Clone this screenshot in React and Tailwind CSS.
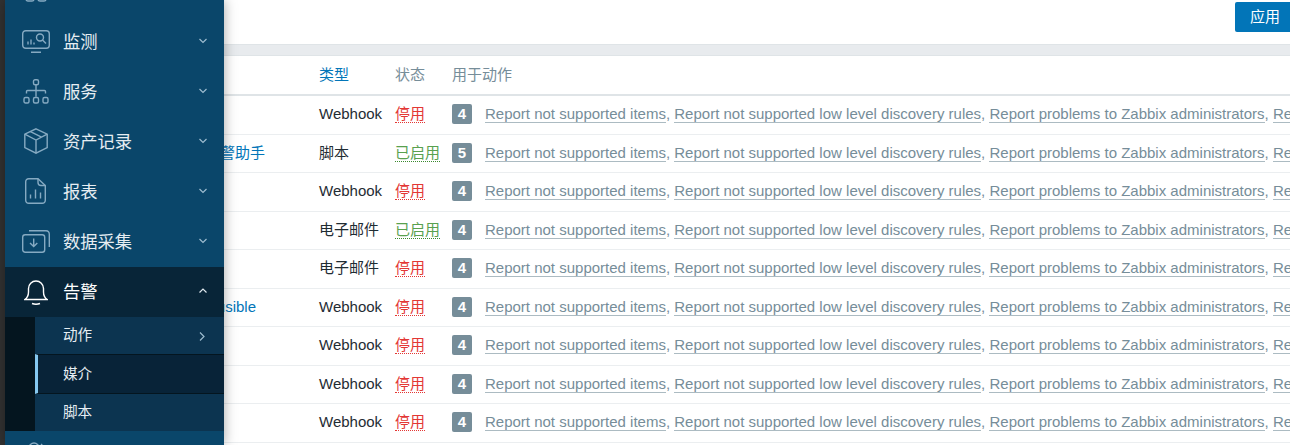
const cjk = '"Liberation Sans", "Noto Sans CJK SC", sans-serif'

const rows = [
  { name: '', type: 'Webhook', on: false, count: 4 },
  { name: '告警助手', type: '脚本', on: true, count: 5 },
  { name: '', type: 'Webhook', on: false, count: 4 },
  { name: '', type: '电子邮件', on: true, count: 4 },
  { name: '', type: '电子邮件', on: false, count: 4 },
  { name: 'Plausible', type: 'Webhook', on: false, count: 4 },
  { name: '', type: 'Webhook', on: false, count: 4 },
  { name: '', type: 'Webhook', on: false, count: 4 },
  { name: '', type: 'Webhook', on: false, count: 4 },
]

const actions = [
  'Report not supported items',
  'Report not supported low level discovery rules',
  'Report problems to Zabbix administrators',
  'Report problems to Zabbix users',
]

const Chevron = ({ dir = 'down', className = 'text-[#9dbccf]' }) => {
  const d = { down: 'M.5 1l3.5 3.5L7.5 1', up: 'M.5 4.5L4 1l3.5 3.5', right: 'M1 .5L5 4.5 1 8.5' }[dir]
  return (
    <svg className={className} width="8" height="9" viewBox="0 0 8 9" fill="none" stroke="currentColor" strokeWidth="1.2">
      <path d={d} />
    </svg>
  )
}

const DashIcon = () => (
  <svg width="22" height="20" viewBox="0 0 22 20" fill="none" stroke="currentColor" strokeWidth="1.4">
    <rect x="1" y="1" width="8" height="8" rx="2" />
    <rect x="13" y="1" width="8" height="8" rx="2" />
    <rect x="1" y="11" width="8" height="8" rx="2" />
    <rect x="13" y="11" width="8" height="8" rx="2" />
  </svg>
)

const MonitorIcon = () => (
  <svg width="28" height="23" viewBox="0 0 28 23" fill="none" stroke="currentColor" strokeWidth="1.4">
    <rect x=".7" y=".7" width="26.600" height="17.600" rx="3" />
    <path d="M9 22.300h10M6 14.500v-3M9 14.500v-5M12 14.500v-2" />
    <circle cx="18" cy="7.500" r="3.500" />
    <path d="M20.500 10l3.500 3.500" />
  </svg>
)

const ServiceIcon = () => (
  <svg width="26" height="25" viewBox="0 0 26 25" fill="none" stroke="currentColor" strokeWidth="1.4">
    <rect x="10.500" y=".7" width="5" height="5" rx="1.500" />
    <path d="M13 5.700v12M3.500 14.500v-2a1 1 0 0 1 1-1h17a1 1 0 0 1 1 1v2" />
    <rect x="1" y="18.500" width="5" height="5.500" rx="1.500" />
    <rect x="10.500" y="18.500" width="5" height="5.500" rx="1.500" />
    <rect x="20" y="18.500" width="5" height="5.500" rx="1.500" />
  </svg>
)

const BoxIcon = () => (
  <svg width="24" height="26" viewBox="0 0 24 26" fill="none" stroke="currentColor" strokeWidth="1.4">
    <path d="M12 .8l11.200 5.400v13.400L12 25.200.8 19.600V6.200z" />
    <path d="M.8 6.200L12 12l11.200-5.800M12 12v13.200M6 3.400l11.500 5.800" />
  </svg>
)

const ReportIcon = () => (
  <svg width="21" height="26" viewBox="0 0 21 26" fill="none" stroke="currentColor" strokeWidth="1.4">
    <path d="M13 .7H3.700a3 3 0 0 0-3 3v18.600a3 3 0 0 0 3 3h13.600a3 3 0 0 0 3-3V7.500z" />
    <path d="M13 .7v3.800a3 3 0 0 0 3 3h4.300M5.500 20.500v-4M10.500 20.500v-9M15.500 20.500v-6" />
  </svg>
)

const CollectIcon = () => (
  <svg width="28" height="23" viewBox="0 0 28 23" fill="none" stroke="currentColor" strokeWidth="1.4">
    <rect x=".7" y="4.700" width="22" height="17.600" rx="2.500" />
    <path d="M7 .7h17a3.500 3.500 0 0 1 3.300 3.500V17M11.700 8.500v8M8 13l3.700 3.600L15.300 13" />
  </svg>
)

const BellIcon = () => (
  <svg className="text-white" width="24" height="25" viewBox="0 0 24 25" fill="none" stroke="currentColor" strokeWidth="1.4">
    <path d="M.8 19.500c3-2 3.700-4 3.700-7.500V8.500a7.500 7.500 0 0 1 15 0V12c0 3.500.7 5.500 3.700 7.500z" />
    <path d="M8 23.500c2.500 1 5.500 1 8 0" />
  </svg>
)

const UserIcon = () => (
  <svg width="24" height="24" viewBox="0 0 24 24" fill="none" stroke="currentColor" strokeWidth="1.4">
    <circle cx="10" cy="7" r="5" />
    <path d="M1 22c0-5 4-8 9-8s9 3 9 8M17 3a5 5 0 0 1 0 8" />
  </svg>
)

const menu = [
  { label: '监测', icon: <MonitorIcon /> },
  { label: '服务', icon: <ServiceIcon /> },
  { label: '资产记录', icon: <BoxIcon /> },
  { label: '报表', icon: <ReportIcon /> },
  { label: '数据采集', icon: <CollectIcon /> },
]

const Sidebar = () => (
  <aside className="relative z-10 ml-[5px] flex h-[445px] w-[219px] shrink-0 flex-col overflow-hidden bg-[#0a466a] text-[#e6edf2] shadow-[0_0_12px_rgba(0,0,0,0.35)]">
    {/* previous item, almost scrolled out */}
    <div className="mt-[-18px] flex h-[35px] shrink-0 items-start">
      <span className="flex w-[58px] shrink-0 justify-center pl-[3px] text-[#86aac2]"><DashIcon /></span>
    </div>
    {menu.map((item) => (
      <div key={item.label} className="flex h-[50px] shrink-0 items-center">
        <span className="mb-[2px] flex w-[58px] shrink-0 justify-center pl-[3px] text-[#86aac2]">{item.icon}</span>
        <span className="pt-[1px] text-[17.3px]">{item.label}</span>
        <span className="ml-auto mr-[17px]"><Chevron /></span>
      </div>
    ))}
    <div className="flex h-[50px] shrink-0 items-center bg-[#082538] text-white">
      <span className="flex w-[58px] shrink-0 justify-center pl-[3px]"><BellIcon /></span>
      <span className="pt-[1px] text-[17.3px]">告警</span>
      <span className="ml-auto mr-[17px]"><Chevron dir="up" className="text-[#dfe8ee]" /></span>
    </div>
    <div className="flex h-[114px] shrink-0 bg-[#04151f] pl-[30px] text-[14.6px]">
      <div className="flex min-w-0 flex-1 flex-col bg-[#0c3450]">
        <div className="flex h-[37px] items-center pl-[28px] pt-[1px]">
          动作
          <span className="ml-auto mr-[17px]"><Chevron dir="right" /></span>
        </div>
        <div className="flex h-[40px] items-center border-y border-[#04151f] border-l-[3px] border-l-[#85c8f0] bg-[#082338] pl-[25px] pt-[1px]">媒介</div>
        <div className="flex h-[37px] items-center pl-[28px] pt-[1px]">脚本</div>
      </div>
    </div>
    <div className="flex h-[50px] shrink-0 items-start pt-[10px]">
      <span className="flex w-[58px] shrink-0 justify-center pl-[3px] text-[#86aac2]"><UserIcon /></span>
    </div>
  </aside>
)

const Row = ({ row }) => (
  <div className="flex h-[38.5px] shrink-0 items-center border-b border-[#ebeef0] pb-[1px] text-[15px]">
    <div className="flex w-[95px] shrink-0 justify-end overflow-hidden whitespace-nowrap pr-[54px] text-[#0275b8]">
      {row.name && <span className={row.name === 'Plausible' ? 'mr-[9px] shrink-0' : 'shrink-0'}>{row.name}</span>}
    </div>
    <div className="w-[76px] shrink-0 text-[#1f2c33]">{row.type}</div>
    <div className="w-[57px] shrink-0">
      <span className={`border-b border-dotted ${row.on ? 'border-[#3a8a2e] text-[#59a14f]' : 'border-[#e33734] text-[#e33734]'}`}>
        {row.on ? '已启用' : '停用'}
      </span>
    </div>
    <div className="mr-[13px] flex h-[20px] w-[20px] shrink-0 items-center justify-center rounded-[2px] bg-[#768d99] font-bold text-white">
      {row.count}
    </div>
    <div className="min-w-0 flex-1 overflow-hidden whitespace-nowrap text-[#768d99]">
      {actions.map((a, i) => (
        <span key={a}>
          <span className="border-b border-[#acbbc2]">{a}</span>
          {i < actions.length - 1 && ', '}
        </span>
      ))}
    </div>
  </div>
)

export default function App() {
  return (
    <div className="flex h-[445px] w-[1290px] overflow-hidden bg-[#333333]" style={{ fontFamily: cjk }}>
      <Sidebar />
      <main className="flex min-w-0 flex-1 flex-col overflow-hidden bg-white">
        <div className="flex h-[44px] shrink-0 items-start justify-end">
          <button className="mr-[-5px] mt-[2px] h-[30px] w-[60px] shrink-0 rounded-[2px] bg-[#0275b8] text-[15px] text-white">应用</button>
        </div>
        <div className="h-[12px] shrink-0 border-y border-[#dfe4e7] bg-[#e8ebee]" />
        <div className="flex h-[40px] shrink-0 items-center border-b-2 border-[#dfe4e7] pt-[1px] text-[15px] text-[#768d99]">
          <div className="w-[95px] shrink-0" />
          <div className="w-[76px] shrink-0 text-[#0275b8]">类型</div>
          <div className="w-[57px] shrink-0">状态</div>
          <div>用于动作</div>
        </div>
        {rows.map((row, i) => <Row key={i} row={row} />)}
      </main>
    </div>
  )
}
